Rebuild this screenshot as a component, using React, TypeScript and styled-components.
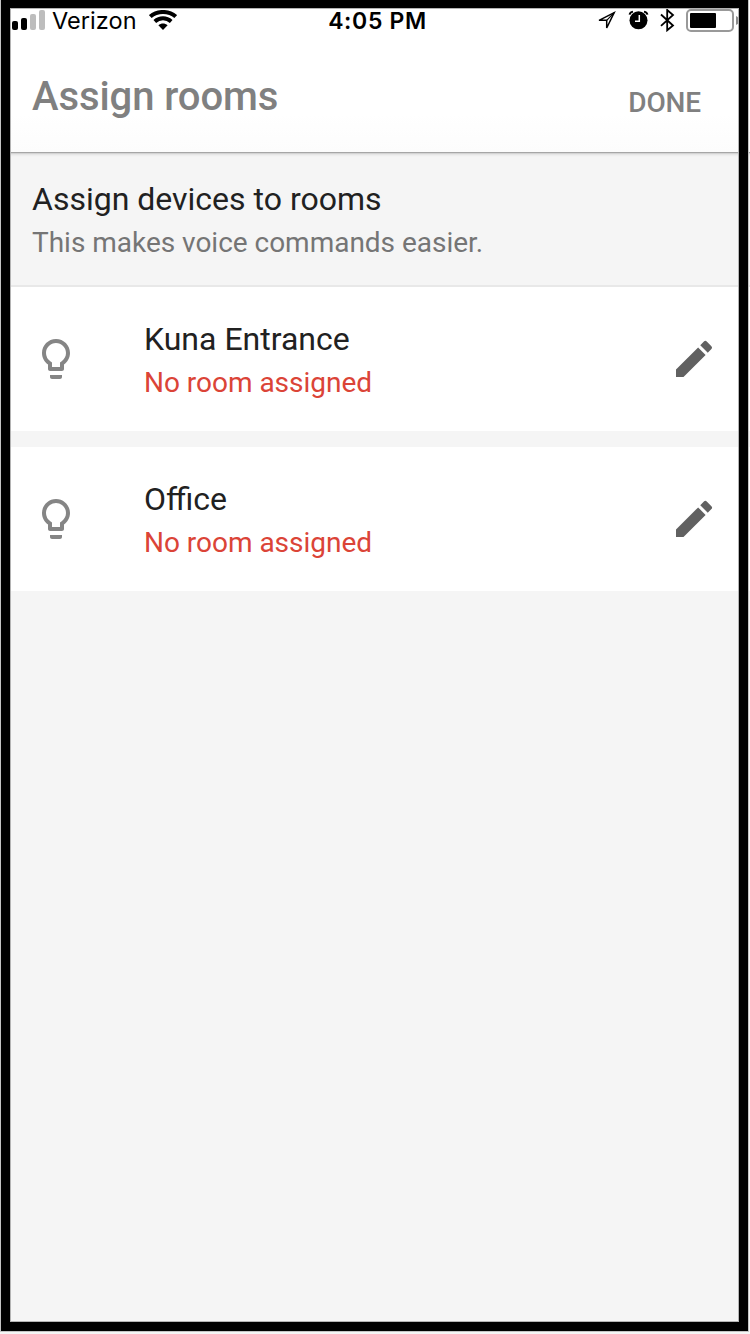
import React from "react";
import styled, { createGlobalStyle } from "styled-components";

const GlobalStyle = createGlobalStyle`
  * { box-sizing: border-box; }
  body { margin: 0; background: #f5f5f5; font-family: Roboto, sans-serif; }
  svg { display: block; }
`;

const Screen = styled.div`
  position: relative;
  width: 750px;
  height: 1334px;
  overflow: hidden;
  background: #f5f5f5;
`;

const DeviceFrame = styled.div`
  position: absolute;
  inset: 0 2px 3px 1px;
  border: 9px solid #000;
  border-top-width: 8px;
  box-shadow: inset 0 0 0 1px #b4b4b4, 0 0 0 1px #c4c4c4;
  pointer-events: none;
`;

const AppBar = styled.header`
  position: relative;
  height: 152px;
  background: linear-gradient(#fff 75%, #fcfcfc);
  box-shadow: 0 1px 1px #a6a6a6, 0 2px 3px rgba(0, 0, 0, 0.16);
`;

const StatusBar = styled.div`
  display: grid;
  grid-template-columns: 1fr auto 1fr;
  align-items: center;
  height: 40px;
  padding: 0 10px 0 12px;
  color: #000;
  font-family: Inter, sans-serif;
`;

const StatusGroup = styled.div<{ $end?: boolean }>`
  display: flex;
  align-items: center;
  justify-content: ${(p) => (p.$end ? "flex-end" : "flex-start")};
`;

const Carrier = styled.span`
  margin: 1px 12px 0 7px;
  font-size: 23.5px;
  line-height: 30px;
  letter-spacing: 0.05px;
`;

const Clock = styled.time`
  padding: 1px 0 0 3px;
  font-size: 23px;
  line-height: 30px;
  font-weight: 600;
  letter-spacing: 0.65px;
`;

const TitleRow = styled.div`
  display: flex;
  align-items: center;
  justify-content: space-between;
  height: 112px;
  padding: 0 49px 0 32px;
`;

const Title = styled.h1`
  margin: 2px 0 0;
  color: #808080;
  font-size: 40px;
  line-height: 48px;
  font-weight: 500;
  letter-spacing: -0.08px;
`;

const DoneButton = styled.button`
  margin: 14px 0 0;
  padding: 0;
  border: 0;
  background: none;
  color: #808080;
  font: 500 28px/34px Roboto, sans-serif;
  letter-spacing: -0.15px;
`;

const Intro = styled.section`
  height: 135px;
  padding: 27px 32px 0;
  border-bottom: 2px solid #e8e8e8;
`;

const Primary = styled.div`
  color: #212121;
  font-size: 32px;
  line-height: 40px;
`;

const Secondary = styled.div<{ $alert?: boolean }>`
  margin-top: 6px;
  color: ${(p) => (p.$alert ? "#db4437" : "#757575")};
  font-size: 28px;
  line-height: 36px;
  letter-spacing: -0.02px;
`;

const DeviceList = styled.div`
  display: flex;
  flex-direction: column;
  gap: 16px;
`;

const DeviceRow = styled.div`
  display: flex;
  align-items: center;
  height: 144px;
  padding: 0 32px;
  background: #fff;
`;

const DeviceText = styled.div`
  flex: 1;
  margin-left: 64px;
  padding-top: 2px;
`;

const Bulb = () => (
  <svg width="48" height="48" viewBox="0 0 24 24" fill="#858585">
    <path d="M9 21c0 .55.45 1 1 1h4c.55 0 1-.45 1-1v-1H9v1zm3-19C8.14 2 5 5.14 5 9c0 2.38 1.19 4.47 3 5.74V17c0 .55.45 1 1 1h6c.55 0 1-.45 1-1v-2.26c1.81-1.27 3-3.36 3-5.74 0-3.86-3.14-7-7-7zm2.85 11.1-.85.6V16h-4v-2.3l-.85-.6A4.997 4.997 0 0 1 7 9c0-2.76 2.24-5 5-5s5 2.24 5 5c0 1.63-.8 3.16-2.15 4.1z" />
  </svg>
);

const Pencil = () => (
  <svg width="48" height="48" viewBox="0 0 24 24" fill="#616161">
    <path d="M3 17.25V21h3.75L17.81 9.94l-3.75-3.75L3 17.25zM20.71 7.04a.996.996 0 0 0 0-1.41l-2.34-2.34a.996.996 0 0 0-1.41 0l-1.83 1.83 3.75 3.75 1.83-1.83z" />
  </svg>
);

const Signal = () => (
  <svg width="33" height="20" viewBox="0 0 33 20">
    <rect x="0" y="11" width="6" height="9" rx="2" />
    <rect x="9" y="8" width="6" height="12" rx="2" />
    <rect x="18" y="4" width="6" height="16" rx="2" fill="#bdbdbd" />
    <rect x="27" y="0" width="6" height="20" rx="2" fill="#bdbdbd" />
  </svg>
);

const Wifi = () => (
  <svg width="28" height="20" viewBox="0 0 28 20">
    <g fill="none" stroke="#000" strokeWidth="4">
      <path d="M1.3 6.6C8.2.4 19.8.4 26.7 6.6" />
      <path d="M5.8 11.5c4.8-4.2 11.6-4.2 16.4 0" />
    </g>
    <path d="M9.4 15.3c2.7-2.4 6.5-2.4 9.2 0L14 20z" />
  </svg>
);

const StatusIcons = () => (
  <svg width="143" height="24" viewBox="597 8 143 24">
    <path d="M599 20.3 614.2 12.7 606.7 28V20.3z" fill="none" stroke="#000" strokeWidth="1.5" />
    <path d="M606.7 20.3 614.2 12.7" stroke="#000" strokeWidth="1.1" />
    <circle cx="638.5" cy="20.3" r="9" />
    <path d="M629.6 14.6q.4-2.3 3.4-3M647.4 14.6q-.4-2.3-3.4-3" fill="none" stroke="#000" strokeWidth="2" />
    <path d="M639.3 15v6.3H635" fill="none" stroke="#fff" strokeWidth="1.5" />
    <path d="m661 14.5 12 11-5.8 4.8V10l5.8 5-12 10.8" fill="none" stroke="#000" strokeWidth="1.8" />
    <rect x="687" y="10" width="46" height="21" rx="4" fill="none" stroke="#999" strokeWidth="2" />
    <rect x="690" y="13" width="26" height="15" rx="1" />
    <path d="M736 16q3 1 3 4.5t-3 4.5z" fill="#8c8c8c" />
  </svg>
);

const devices = ["Kuna Entrance", "Office"];

export default function App() {
  return (
    <>
      <GlobalStyle />
      <Screen>
        <AppBar>
          <StatusBar>
            <StatusGroup>
              <Signal />
              <Carrier>Verizon</Carrier>
              <Wifi />
            </StatusGroup>
            <Clock>4:05 PM</Clock>
            <StatusGroup $end>
              <StatusIcons />
            </StatusGroup>
          </StatusBar>
          <TitleRow>
            <Title>Assign rooms</Title>
            <DoneButton>DONE</DoneButton>
          </TitleRow>
        </AppBar>
        <Intro>
          <Primary>Assign devices to rooms</Primary>
          <Secondary>This makes voice commands easier.</Secondary>
        </Intro>
        <DeviceList>
          {devices.map((name) => (
            <DeviceRow key={name}>
              <Bulb />
              <DeviceText>
                <Primary>{name}</Primary>
                <Secondary $alert>No room assigned</Secondary>
              </DeviceText>
              <Pencil />
            </DeviceRow>
          ))}
        </DeviceList>
        <DeviceFrame />
      </Screen>
    </>
  );
}
